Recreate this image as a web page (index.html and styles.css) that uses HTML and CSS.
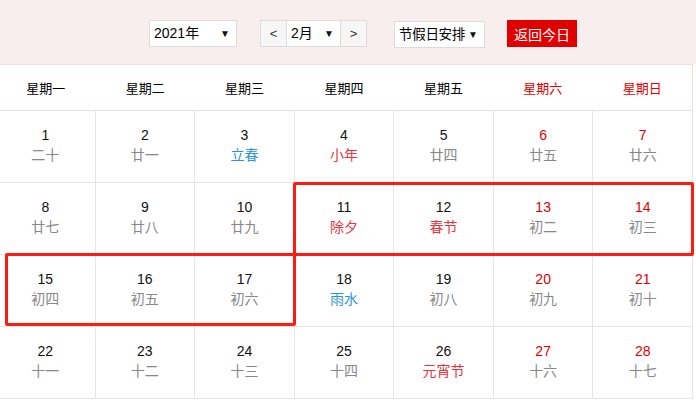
FILE: index.html
```html
<!DOCTYPE html>
<html lang="zh-CN">
<head>
<meta charset="utf-8">
<title>万年历</title>
<link rel="stylesheet" href="styles.css">
</head>
<body>
<div class="page">
  <div class="toolbar">
    <div class="select year"><span>2021年</span><span class="arrow">▼</span></div>
    <div class="month-group">
      <div class="nav">&lt;</div>
      <div class="select month"><span>2月</span><span class="arrow">▼</span></div>
      <div class="nav">&gt;</div>
    </div>
    <div class="select holiday"><span class="hol-text">节假日安排</span><span class="arrow">▼</span></div>
    <div class="today-btn">返回今日</div>
  </div>

  <div class="weekdays">
    <div>星期一</div><div>星期二</div><div>星期三</div><div>星期四</div><div>星期五</div><div class="we">星期六</div><div class="we">星期日</div>
  </div>

  <div class="days">
    <div class="cell"><span class="num">1</span><span class="lunar">二十</span></div>
    <div class="cell"><span class="num">2</span><span class="lunar">廿一</span></div>
    <div class="cell"><span class="num">3</span><span class="lunar term">立春</span></div>
    <div class="cell"><span class="num">4</span><span class="lunar fest">小年</span></div>
    <div class="cell"><span class="num">5</span><span class="lunar">廿四</span></div>
    <div class="cell wkend"><span class="num">6</span><span class="lunar">廿五</span></div>
    <div class="cell wkend"><span class="num">7</span><span class="lunar">廿六</span></div>

    <div class="cell"><span class="num">8</span><span class="lunar">廿七</span></div>
    <div class="cell"><span class="num">9</span><span class="lunar">廿八</span></div>
    <div class="cell"><span class="num">10</span><span class="lunar">廿九</span></div>
    <div class="cell"><span class="num">11</span><span class="lunar fest">除夕</span></div>
    <div class="cell"><span class="num">12</span><span class="lunar fest">春节</span></div>
    <div class="cell wkend"><span class="num">13</span><span class="lunar">初二</span></div>
    <div class="cell wkend"><span class="num">14</span><span class="lunar">初三</span></div>

    <div class="cell"><span class="num">15</span><span class="lunar">初四</span></div>
    <div class="cell"><span class="num">16</span><span class="lunar">初五</span></div>
    <div class="cell"><span class="num">17</span><span class="lunar">初六</span></div>
    <div class="cell"><span class="num">18</span><span class="lunar term">雨水</span></div>
    <div class="cell"><span class="num">19</span><span class="lunar">初八</span></div>
    <div class="cell wkend"><span class="num">20</span><span class="lunar">初九</span></div>
    <div class="cell wkend"><span class="num">21</span><span class="lunar">初十</span></div>

    <div class="cell"><span class="num">22</span><span class="lunar">十一</span></div>
    <div class="cell"><span class="num">23</span><span class="lunar">十二</span></div>
    <div class="cell"><span class="num">24</span><span class="lunar">十三</span></div>
    <div class="cell"><span class="num">25</span><span class="lunar">十四</span></div>
    <div class="cell"><span class="num">26</span><span class="lunar fest">元宵节</span></div>
    <div class="cell wkend"><span class="num">27</span><span class="lunar">十六</span></div>
    <div class="cell wkend"><span class="num">28</span><span class="lunar">十七</span></div>
  </div>

  <div class="mark mark-a"></div>
  <div class="mark mark-b"></div>
</div>
</body>
</html>
```

FILE: styles.css
```css
* { box-sizing: border-box; }
html, body { margin: 0; padding: 0; background: #fff; }
body {
  font-family: "Liberation Sans", "Noto Sans CJK SC", sans-serif;
  color: #000;
  overflow: hidden;
}
.page { position: relative; width: 696px; height: 400px; overflow: hidden; }

.toolbar {
  height: 64px;
  background: #f9eeee;
  display: flex;
  align-items: flex-start;
  padding: 20px 0 0 149px;
  font-size: 14px;
}
.select {
  height: 27px;
  background: #fff;
  border: 1px solid #dcdcdc;
  display: flex;
  align-items: center;
  justify-content: space-between;
  padding: 0 6px 0 4px;
  line-height: 25px;
}
.arrow { font-size: 10px; color: #111; }
.year { width: 88px; }
.month-group { display: flex; margin-left: 23px; }
.nav {
  width: 27px;
  height: 27px;
  background: #f6f6f6;
  border: 1px solid #dcdcdc;
  display: flex;
  align-items: center;
  justify-content: center;
  color: #333;
  font-size: 13px;
}
.month { width: 53px; border-left: 0; border-right: 0; }
.holiday { width: 91px; margin-left: 27px; margin-top: 1px; padding: 0 6px 0 4px; }
.hol-text { font-size: 13.5px; letter-spacing: -0.3px; }
.today-btn {
  margin-left: 22px;
  height: 27px;
  width: 70px;
  background: #e00000;
  color: #fff;
  display: flex;
  align-items: center;
  justify-content: center;
}

.weekdays {
  margin-left: -4px;
  width: 697px;
  height: 47px;
  display: grid;
  grid-template-columns: repeat(7, 1fr);
  border-top: 1px solid #f3dcdc;
  border-bottom: 1px solid #f3dcdc;
  border-right: 1px solid #f3dcdc;
  font-size: 13px;
  align-items: center;
  text-align: center;
}
.weekdays .we { color: #e00000; }

.days {
  margin-left: -4px;
  width: 697px;
  display: grid;
  grid-template-columns: repeat(7, 1fr);
}
.cell {
  height: 72px;
  border-right: 1px solid #e6e6e6;
  border-bottom: 1px solid #e6e6e6;
  display: flex;
  flex-direction: column;
  align-items: center;
  padding-top: 14px;
  font-size: 14px;
}
.num { line-height: 20px; color: #111; }
.lunar { line-height: 20px; color: #888; }
.wkend .num { color: #e00000; }
.lunar.term { color: #2a95d6; }
.lunar.fest { color: #e8343c; }

.mark {
  position: absolute;
  border: 3px solid #ff1a14;
  border-radius: 2px;
}
.mark-a { left: 293px; top: 182px; width: 401px; height: 74px; }
.mark-b { left: 5px; top: 253px; width: 291px; height: 73px; }
```
